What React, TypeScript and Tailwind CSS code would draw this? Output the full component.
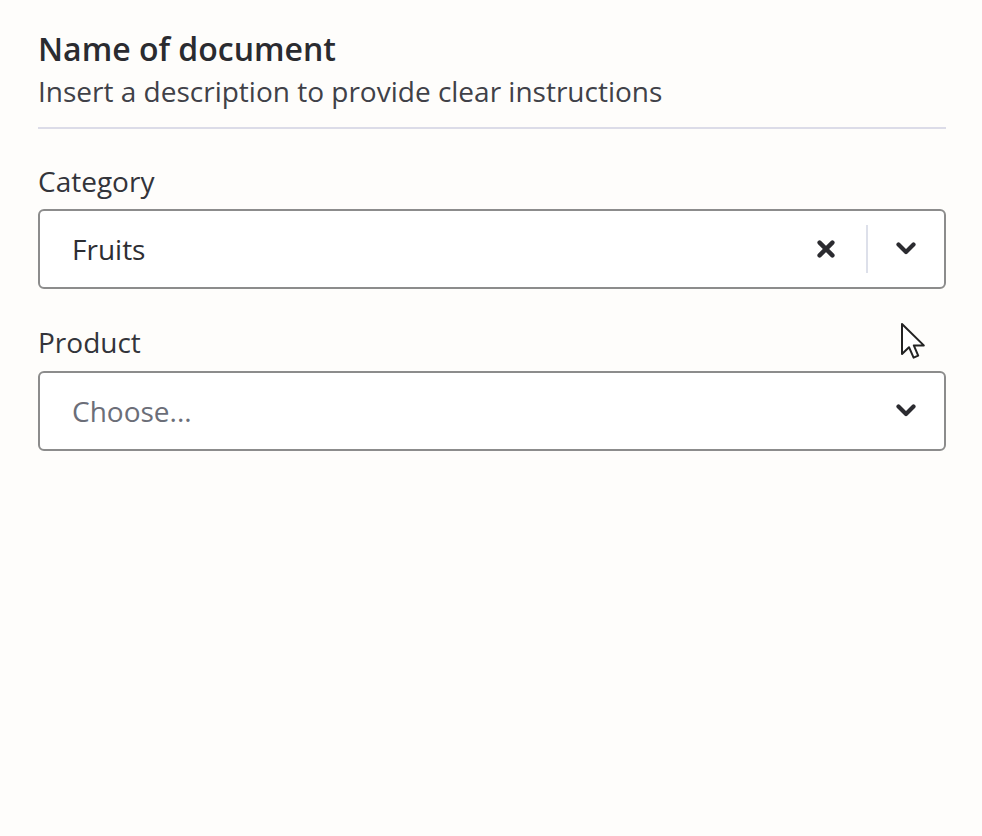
import React from "react";

function Chevron() {
  return (
    <svg width="20" height="14" viewBox="0 0 20 14" fill="none">
      <path d="M2.5 2.5l7.5 7.5 7.5-7.5" stroke="#2b2b30" strokeWidth="4.2" strokeLinecap="round" strokeLinejoin="round" />
    </svg>
  );
}

function Cross() {
  return (
    <svg width="18" height="18" viewBox="0 0 18 18" fill="none">
      <path d="M2.6 2.6l12.8 12.8M15.4 2.6l-12.8 12.8" stroke="#2b2b30" strokeWidth="4.4" strokeLinecap="round" />
    </svg>
  );
}

export default function App() {
  return (
    <div
      className="relative min-h-[836px] w-full bg-[#fefdfb] text-[#2d2e33]"
      style={{ fontFamily: '"Open Sans", "Noto Sans", sans-serif' }}
    >
      <div className="pl-[38px] pr-[36px] pt-[29px]">
        <div className="border-b-2 border-[#dcdce8] pb-[18px]">
          <h1 className="text-[32px] font-semibold leading-[40px] text-[#2a2b30]">Name of document</h1>
          <p className="mt-[4px] text-[28px] leading-[36px] text-[#404148]">Insert a description to provide clear instructions</p>
        </div>

        <div className="mt-[34px]">
          <label className="block text-[28px] leading-[36px] text-[#33343a]">Category</label>
          <div className="mt-[10px] flex h-[80px] items-center rounded-[6px] border-2 border-[#8c8c8c] bg-white pl-[32px] pr-[28px]">
            <span className="flex-1 text-[28px] leading-[36px] text-[#2d2e33]">Fruits</span>
            <div className="flex h-full items-center">
              <span className="mr-[31px] flex"><Cross /></span>
              <span className="h-[48px] w-[2px] bg-[#dde0ea]"></span>
              <span className="ml-[28px] flex"><Chevron /></span>
            </div>
          </div>
        </div>

        <div className="mt-[35px]">
          <label className="block text-[28px] leading-[36px] text-[#33343a]">Product</label>
          <div className="mt-[11px] flex h-[80px] items-center rounded-[6px] border-2 border-[#8c8c8c] bg-white pl-[32px] pr-[28px]">
            <span className="flex-1 text-[28px] leading-[36px] text-[#6b6e78]">Choose...</span>
            <span className="flex"><Chevron /></span>
          </div>
        </div>
      </div>

      <svg className="absolute left-[900px] top-[322px]" width="26" height="38" viewBox="0 0 13 19">
        <path d="M1 1v15l3.5-3.4 2.3 5.2 2.3-1-2.2-5.1h5z" fill="#fff" stroke="#222" strokeWidth="1" strokeLinejoin="round" />
      </svg>
    </div>
  );
}
